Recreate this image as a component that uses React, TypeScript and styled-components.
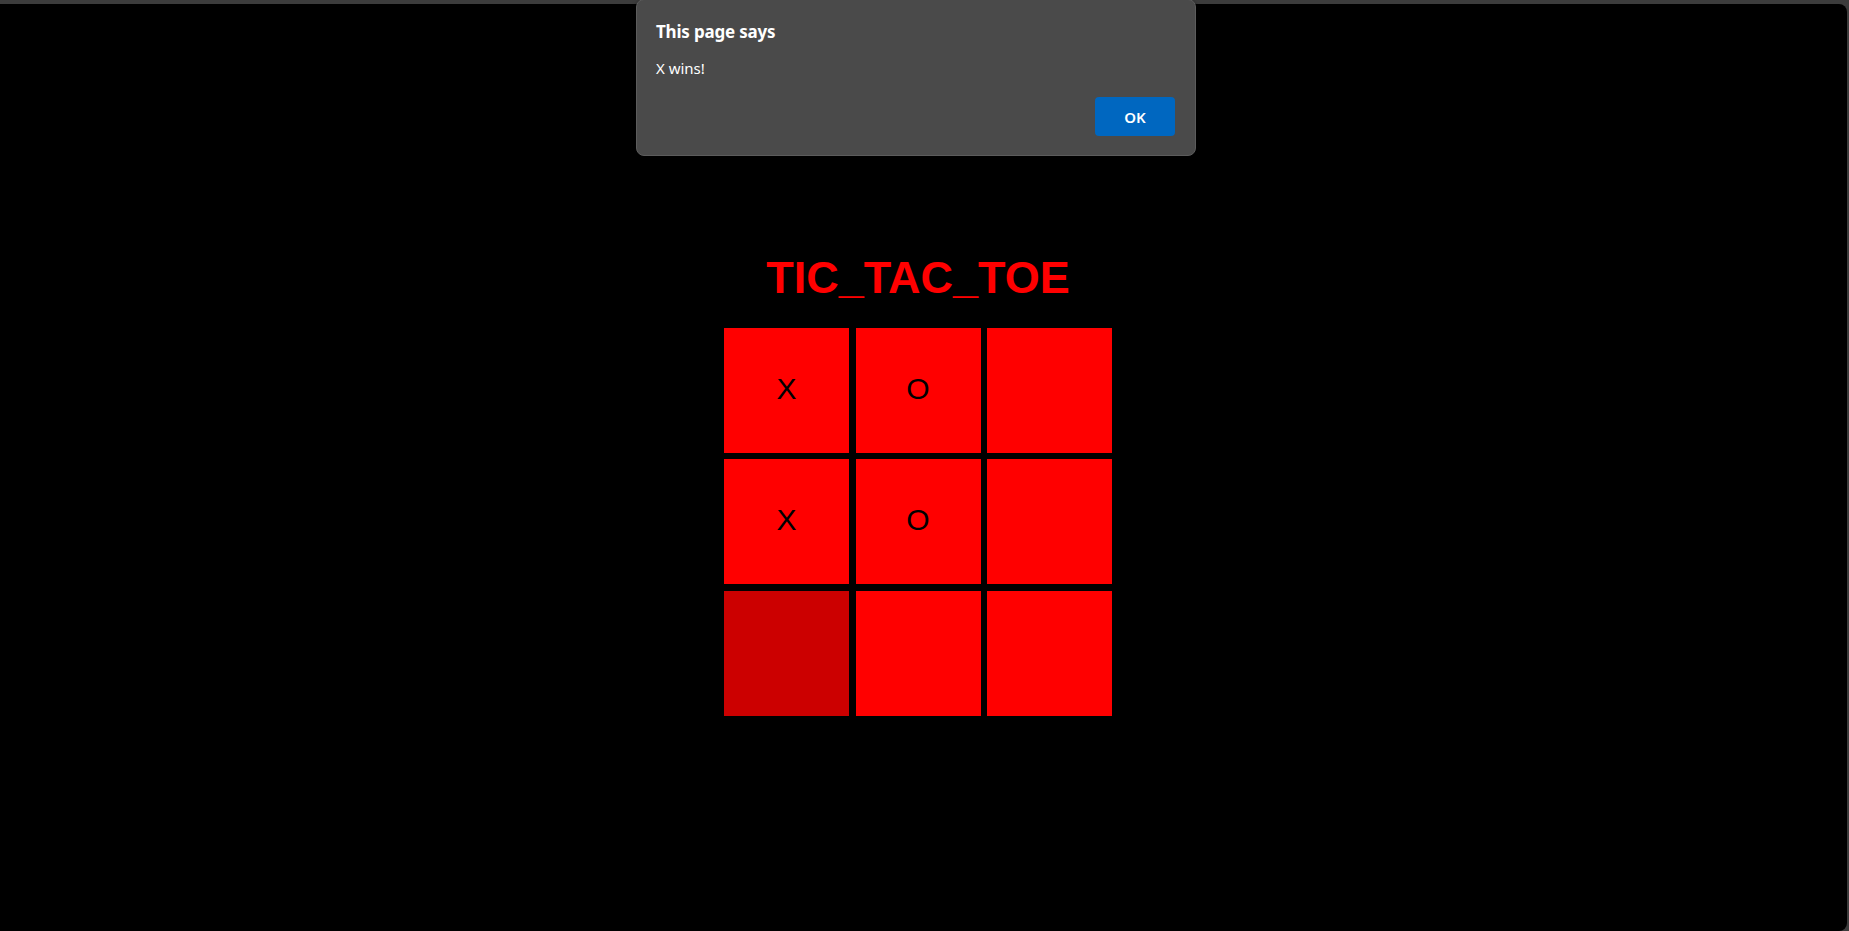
import React from "react";
import styled, { createGlobalStyle } from "styled-components";

const GlobalStyle = createGlobalStyle`
  html, body { margin: 0; padding: 0; background: #3c3c3c; }
  body { font-family: "Liberation Sans", Arial, sans-serif; }
`;

const Frame = styled.div`
  position: relative;
  height: 931px;
  box-sizing: border-box;
  padding: 4px 2px 0 0;
  background: #3c3c3c;
  overflow: hidden;
`;

const Viewport = styled.main`
  height: 100%;
  box-sizing: border-box;
  background: #000;
  border-top-right-radius: 8px;
  border-bottom-right-radius: 8px;
  padding: 248px 11px 0 0;
  display: flex;
  flex-direction: column;
  align-items: center;
`;

const Title = styled.h1`
  margin: 0 0 24px;
  font-family: "Liberation Sans", Arial, sans-serif;
  font-weight: 700;
  font-size: 45px;
  line-height: 52px;
  color: #ff0000;
`;

const Board = styled.div`
  display: grid;
  grid-template-columns: repeat(3, 125px);
  grid-auto-rows: 125px;
  gap: 6.4px;
`;

const Cell = styled.button<{ $hover?: boolean }>`
  border: none;
  padding: 0 0 4px;
  margin: 0;
  background: ${(p) => (p.$hover ? "#cc0000" : "#ff0000")};
  color: #000;
  font-family: "Liberation Sans", Arial, sans-serif;
  font-size: 30px;
  display: flex;
  align-items: center;
  justify-content: center;
  cursor: pointer;
`;

const Dialog = styled.div`
  position: absolute;
  left: 636px;
  top: -1px;
  width: 560px;
  height: 157px;
  box-sizing: border-box;
  background: #4a4a4a;
  border: 1px solid #5c5c5c;
  border-radius: 8px;
  box-shadow: 0 2px 4px rgba(0, 0, 0, 0.6);
  padding: 19px 20px 19px 19px;
  display: flex;
  flex-direction: column;
  font-family: "Segoe UI", "Noto Sans", "Open Sans", sans-serif;
  color: #fff;
`;

const DialogTitle = styled.div`
  font-weight: 700;
  font-size: 17px;
  line-height: 26px;
  letter-spacing: -0.2px;
`;

const DialogMessage = styled.div`
  margin-top: 12px;
  font-size: 15px;
  line-height: 22px;
`;

const Actions = styled.div`
  margin-top: auto;
  display: flex;
  justify-content: flex-end;
`;

const OkButton = styled.button`
  width: 80px;
  height: 39px;
  border: none;
  border-radius: 4px;
  background: #0067c0;
  color: #fff;
  font-family: "Segoe UI", "Noto Sans", "Open Sans", sans-serif;
  font-size: 15px;
  font-weight: 600;
`;

const board = ["X", "O", "", "X", "O", "", "", "", ""];

export default function App() {
  return (
    <>
      <GlobalStyle />
      <Frame>
        <Viewport>
          <Title>TIC_TAC_TOE</Title>
          <Board>
            {board.map((v, i) => (
              <Cell key={i} $hover={i === 6}>
                {v}
              </Cell>
            ))}
          </Board>
        </Viewport>
        <Dialog role="alertdialog">
          <DialogTitle>This page says</DialogTitle>
          <DialogMessage>X wins!</DialogMessage>
          <Actions>
            <OkButton>OK</OkButton>
          </Actions>
        </Dialog>
      </Frame>
    </>
  );
}
